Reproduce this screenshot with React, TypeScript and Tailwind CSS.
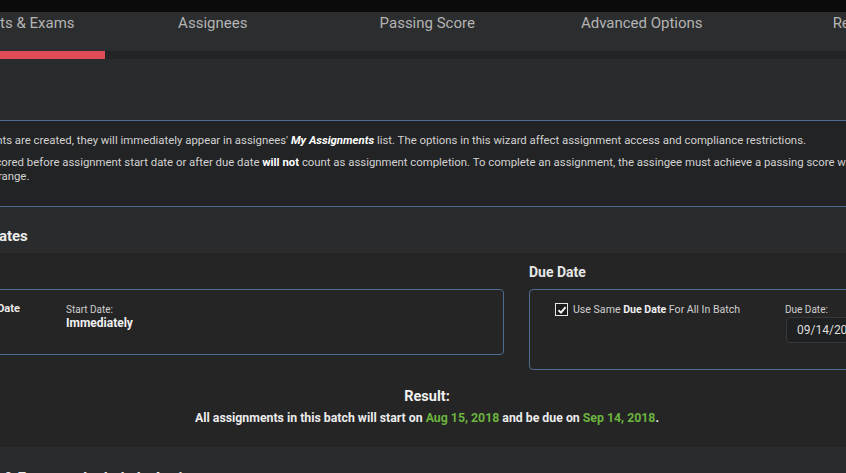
import React from 'react';

/* ─── Wizard tabs across the top ─── */
const TABS = ['Choose Tests & Exams', 'Assignees', 'Passing Score', 'Advanced Options', 'Review'];

function TabBar() {
  return (
    <div className="bg-[#2c2d2e]">
      <div className="flex h-[39px] -ml-[109px]">
        {TABS.map((t) => (
          <div
            key={t}
            className="w-[214.5px] shrink-0 text-center text-[15px] leading-[20px] pt-[1px] text-[#b4b4b4] whitespace-nowrap"
          >
            {t}
          </div>
        ))}
      </div>
      {/* progress track */}
      <div className="h-[8px] bg-[#232425]">
        <div className="h-full w-[105px] bg-[#e04b58]" />
      </div>
    </div>
  );
}

function CheckBox() {
  return (
    <span className="flex h-[13px] w-[13px] shrink-0 items-center justify-center border border-[#e6e6e6] bg-[#1d1d1d]">
      <svg width="10" height="10" viewBox="0 0 10 10">
        <path d="M1.5 5.2 L4 7.6 L8.6 2.2" stroke="#f2f2f2" strokeWidth="2" fill="none" />
      </svg>
    </span>
  );
}

export default function App() {
  return (
    <div className="w-[846px] h-[473px] overflow-hidden bg-[#2a2b2c] font-['Roboto',sans-serif]">
      <div className="h-[12px] bg-[#0b0b0b]" />
      <TabBar />

      {/* page content (wider than the window, shifted left) */}
      <div className="-ml-[120px] w-[1094px] pt-[61px]">
        {/* info notice */}
        <div className="h-[87px] rounded-[3px] border border-[#4e6b93] bg-[#222324] pl-[37px] pt-[12px] text-[11.36px] text-[#d2d2d2] whitespace-nowrap">
          <p className="leading-[14px]">
            Once assignments are created, they will immediately appear in assignees'{' '}
            <b className="italic text-white">My Assignments</b> list. The options in this wizard affect assignment access and compliance restrictions.
          </p>
          <p className="mt-[8px] leading-[14px]">
            Assessments scored before assignment start date or after due date <b className="text-white">will not</b> count as assignment completion. To complete an assignment, the assingee must achieve a passing score within the
            <br />
            scheduled date range.
          </p>
        </div>

        <h2 className="mt-[19px] mb-[7px] pl-[83px] text-[15px] leading-[20px] font-bold text-[#ececec]">Set Dates</h2>

        {/* dates panel */}
        <div className="h-[194px] bg-[#252526] px-[20px] pt-[10px]">
          <div className="flex gap-[25px]">
            <div className="w-[604px] shrink-0">
              <h3 className="mb-[8px] text-[14px] leading-[18px] font-bold text-[#e6e6e6]">Start Date</h3>
              <div className="flex h-[66px] rounded-[4px] border border-[#4e6b93] pl-[69px] pt-[12px]">
                <div className="w-[96px] text-[11px] leading-[14px] font-bold text-[#ececec]">Start Date</div>
                <div className="pt-[1px]">
                  <div className="text-[10px] leading-[13px] text-[#cfcfcf]">Start Date:</div>
                  <div className="text-[12px] leading-[14px] font-bold text-[#f0f0f0]">Immediately</div>
                </div>
              </div>
            </div>

            <div className="w-[425px] shrink-0">
              <h3 className="mb-[8px] text-[14px] leading-[18px] font-bold text-[#e6e6e6]">Due Date</h3>
              <div className="flex h-[81px] rounded-[4px] border border-[#4e6b93] pl-[25px] pt-[13px]">
                <div className="flex w-[230px] items-start gap-[5px]">
                  <CheckBox />
                  <span className="text-[10.6px] leading-[13px] text-[#cfcfcf] whitespace-nowrap">
                    Use Same <b className="text-[#f0f0f0]">Due Date</b> For All In Batch
                  </span>
                </div>
                <div>
                  <div className="text-[10px] leading-[13px] text-[#cfcfcf]">Due Date:</div>
                  <div className="mt-[1px] ml-[1px] flex h-[26px] w-[150px] items-center rounded-[4px] border border-[#363738] bg-[#1f2021] pl-[10px] text-[12px] text-[#dedede]">
                    09/14/2018
                  </div>
                </div>
              </div>
            </div>
          </div>

          {/* result summary */}
          <div className="mt-[18px] text-center">
            <div className="text-[14.5px] leading-[18px] font-bold text-[#f0f0f0]">Result:</div>
            <div className="mt-[5px] text-[12.3px] leading-[15px] font-bold text-[#ececec]">
              All assignments in this batch will start on <span className="text-[#6cb33f]">Aug 15, 2018</span> and be due on{' '}
              <span className="text-[#6cb33f]">Sep 14, 2018</span>.
            </div>
          </div>
        </div>

        <h2 className="mt-[21px] pl-[83px] text-[15px] leading-[20px] font-bold text-[#ececec] whitespace-nowrap">
          Tests &amp; Exams to Include In Assignment
        </h2>
      </div>
    </div>
  );
}
